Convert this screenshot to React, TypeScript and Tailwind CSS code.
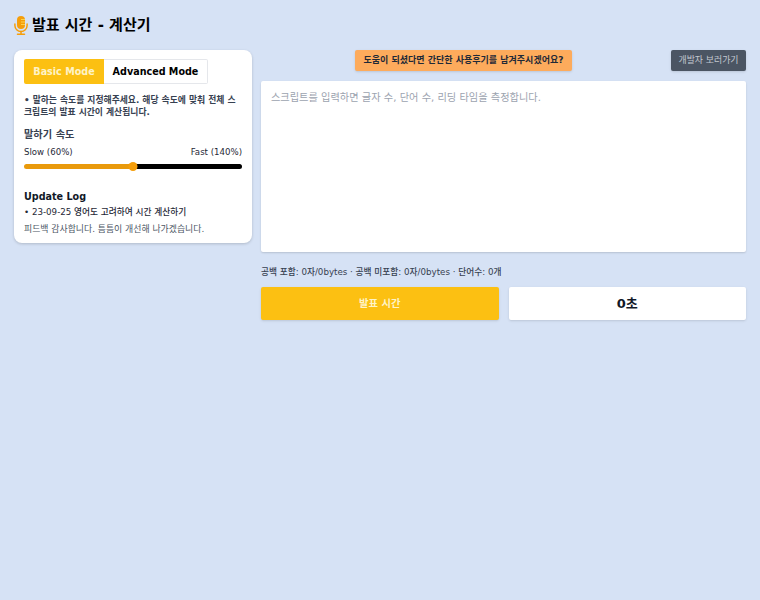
const font = "font-['DejaVu_Sans','Noto_Sans_CJK_KR',sans-serif]";

function MicIcon() {
  return (
    <svg width="14" height="19" viewBox="0 0 14 19" className="shrink-0">
      <rect x="3" y="0" width="8" height="13" rx="4" fill="#f59e0b" />
      <path d="M7 3.5h4M7 6h4M7 8.5h4" stroke="#fcd34d" strokeWidth="1" />
      <path d="M0.9 8v1.5a6.1 6.1 0 0 0 12.2 0V8" fill="none" stroke="#f59e0b" strokeWidth="1.5" strokeLinecap="round" />
      <path d="M7 15.5v2.5M3.5 18.2h7" stroke="#f59e0b" strokeWidth="1.5" strokeLinecap="round" />
    </svg>
  );
}

function SideCard() {
  return (
    <div className="w-[238px] shrink-0 rounded-[8px] bg-white px-[10px] pt-[9px] pb-[7px] shadow-[0_1px_3px_rgba(0,0,0,0.18)]">
      <div className="flex w-fit">
        <button className="h-[25px] w-[80px] rounded-l-[2px] bg-[#fcc012] pt-px text-[9.6px] font-bold text-[#fef3c7]">Basic Mode</button>
        <button className="h-[25px] w-[104px] rounded-r-[2px] border border-l-0 border-[#e5e7eb] bg-white pt-px text-[9.6px] font-bold text-black">Advanced Mode</button>
      </div>
      <p className="mt-[10px] text-[8.8px] leading-[12px] font-semibold break-all text-[#374151]">
        • 말하는 속도를 지정해주세요. 해당 속도에 맞춰 전체 스크립트의 발표 시간이 계산됩니다.
      </p>
      <h3 className="mt-[10px] text-[10.2px] leading-[14px] font-semibold text-[#374151]">말하기 속도</h3>
      <div className="mt-[4px] flex justify-between text-[8.6px] leading-[12px] font-medium text-[#1f2937]">
        <span>Slow (60%)</span>
        <span>Fast (140%)</span>
      </div>
      <div className="relative mt-[3px] flex h-[10px] items-center">
        <div className="flex h-[5px] w-full overflow-hidden rounded-full">
          <div className="h-full w-1/2 bg-[#e99a0c]" />
          <div className="h-full w-1/2 bg-black" />
        </div>
        <div className="absolute left-1/2 h-[9px] w-[9px] -translate-x-1/2 rounded-full bg-[#f59e0b]" />
      </div>
      <h3 className="mt-[18px] text-[9.6px] leading-[16px] font-bold text-[#111827]">Update Log</h3>
      <p className="text-[8.7px] leading-[14px] font-medium text-[#1f2937]">• 23-09-25 영어도 고려하여 시간 계산하기</p>
      <p className="mt-[3px] text-[8.9px] leading-[14px] text-[#4b5563]">피드백 감사합니다. 틈틈이 개선해 나가겠습니다.</p>
    </div>
  );
}

function Editor() {
  return (
    <div className="flex-1 min-w-0">
      <div className="flex h-[31px] items-start">
        <div className="flex flex-1 justify-center pr-[5px]">
          <a className="flex h-[21px] w-[217px] items-center justify-center rounded-[2px] bg-[#fdab5c] text-[9px] font-semibold text-[#1f2937] shadow-sm">
            도움이 되셨다면 간단한 사용후기를 남겨주시겠어요?
          </a>
        </div>
        <a className="flex h-[21px] w-[75px] items-center justify-center rounded-[2px] bg-[#4b5563] text-[8.9px] text-[#c4c9d1] shadow-sm">
          개발자 보러가기
        </a>
      </div>
      <textarea
        readOnly
        placeholder="스크립트를 입력하면 글자 수, 단어 수, 리딩 타임을 측정합니다."
        className="block h-[171px] w-full resize-none rounded-[2px] bg-white px-[10px] py-[9px] text-[10.2px] leading-[15px] shadow-[0_1px_2px_rgba(0,0,0,0.15)] outline-none placeholder:text-[#9ca3af]"
      />
      <p className="mt-[13px] text-[8.7px] leading-[14px] font-medium text-[#374151]">
        공백 포함: 0자/0bytes · 공백 미포함: 0자/0bytes · 단어수: 0개
      </p>
      <div className="mt-[8px] flex gap-[10px]">
        <button className="h-[33px] flex-1 rounded-[2px] bg-[#fcc012] text-[10.3px] font-semibold text-[#fef3c7] shadow-sm">발표 시간</button>
        <div className="flex h-[33px] flex-1 items-center justify-center rounded-[2px] bg-white text-[13px] font-bold text-[#111827] shadow-sm">0초</div>
      </div>
    </div>
  );
}

export default function App() {
  return (
    <div className={`${font} min-h-[600px] bg-[#d6e2f5] px-[14px] pt-[15px]`}>
      <div className="flex h-[20px] items-center gap-[4px]">
        <MicIcon />
        <h1 className="text-[15px] font-bold text-black">발표 시간 - 계산기</h1>
      </div>
      <div className="mt-[15px] flex items-start gap-[9px]">
        <SideCard />
        <Editor />
      </div>
    </div>
  );
}
